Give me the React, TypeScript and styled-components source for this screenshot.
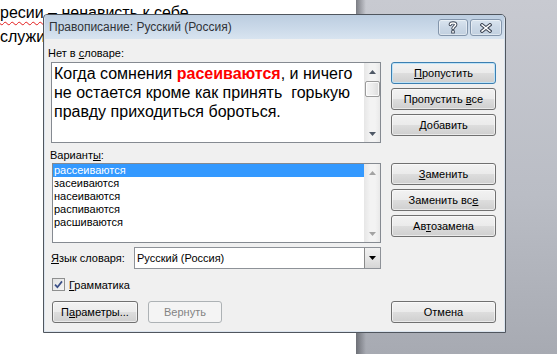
import React from 'react';
import styled, { createGlobalStyle } from 'styled-components';

const GlobalStyle = createGlobalStyle`
  html, body {
    margin: 0;
    padding: 0;
    width: 557px;
    height: 354px;
    overflow: hidden;
  }
  body {
    font-family: "Liberation Sans", Arial, sans-serif;
  }
`;

const UI_FONT = `"Liberation Sans", Tahoma, Arial, sans-serif`;

const Screen = styled.div`
  position: relative;
  display: flex;
  width: 557px;
  height: 354px;
  overflow: hidden;
`;

const DocPage = styled.div`
  width: 356px;
  flex-shrink: 0;
  background: #fff;
  padding-top: 1px;
  font-family: "Liberation Sans", Arial, sans-serif;
  font-size: 16px;
  line-height: 24px;
  color: #000;
  white-space: nowrap;
`;

const Misspelled = styled.span`
  text-decoration: underline wavy #e31b1b;
  text-decoration-thickness: 1px;
  text-underline-offset: 3px;
`;

const Workspace = styled.div`
  flex: 1;
  background: linear-gradient(90deg, rgba(70, 72, 78, 0.6), rgba(70, 72, 78, 0) 10px),
    linear-gradient(180deg, #c8cad1 0%, #babdc5 55%, #a7aab2 100%);
`;

const Window = styled.div`
  position: absolute;
  left: 43px;
  top: 14px;
  width: 463px;
  height: 319px;
  box-sizing: border-box;
  border: 1px solid #50565e;
  border-radius: 4px 5px 0 0;
  padding: 0 1px 1px 1px;
  background: #dbe4ee;
  display: flex;
  flex-direction: column;
  overflow: hidden;
`;

const TitleBar = styled.div`
  height: 24px;
  display: flex;
  align-items: flex-start;
  background: linear-gradient(180deg, #bccde0 0%, #c9d8e8 50%, #d8e4f0 100%);
`;

const Title = styled.div`
  flex: 1;
  padding-left: 4px;
  line-height: 24px;
  font-family: "Liberation Sans", "Segoe UI", sans-serif;
  font-size: 12px;
  color: #2f3338;
`;

const CaptionButtons = styled.div`
  display: flex;
  gap: 2px;
  margin: 4px 2px 0 0;
`;

const CaptionButton = styled.div<{ $w: number }>`
  width: ${(p) => p.$w}px;
  height: 17px;
  box-sizing: border-box;
  border: 1px solid #8395ab;
  border-radius: 3px;
  background: linear-gradient(180deg, #d9e4ef 0%, #cbd8e6 50%, #c1d0e0 100%);
  box-shadow: inset 0 0 0 1px rgba(255, 255, 255, 0.45);
  display: flex;
  align-items: center;
  justify-content: center;
`;

const Body = styled.div`
  flex: 1;
  background: #f0f0f0;
  padding: 0 8px 0 6px;
  display: flex;
  flex-direction: column;
  font-family: ${UI_FONT};
  font-size: 11px;
  color: #000;
`;

const FieldLabel = styled.div<{ $indent: number; $top: number }>`
  margin: ${(p) => p.$top}px 0 0 ${(p) => p.$indent}px;
  height: 14px;
  line-height: 14px;
`;

const Key = styled.span`
  text-decoration: underline;
  text-underline-offset: 1px;
`;

const Section = styled.div<{ $top: number }>`
  display: flex;
  gap: 10px;
  margin-top: ${(p) => p.$top}px;
`;

const ButtonColumn = styled.div`
  width: 105px;
  display: flex;
  flex-direction: column;
  gap: 4px;
`;

const Button = styled.div<{ $w?: number; $default?: boolean; $disabled?: boolean }>`
  width: ${(p) => p.$w ?? 105}px;
  height: 22px;
  box-sizing: border-box;
  border: 1px solid ${(p) => (p.$default ? '#3c7fb1' : p.$disabled ? '#adb2b5' : '#707070')};
  border-radius: 3px;
  background: ${(p) =>
    p.$disabled
      ? '#f4f4f4'
      : 'linear-gradient(180deg, #f2f2f2 0%, #ebebeb 48%, #dddddd 52%, #cfcfcf 100%)'};
  box-shadow: ${(p) =>
    p.$default
      ? 'inset 0 0 0 1px #bfe3f7'
      : p.$disabled
      ? 'none'
      : 'inset 0 0 0 1px rgba(255, 255, 255, 0.55)'};
  color: ${(p) => (p.$disabled ? '#838383' : '#000')};
  display: flex;
  align-items: center;
  justify-content: center;
  line-height: 14px;
`;

const TextBox = styled.div`
  width: 330px;
  height: 81px;
  box-sizing: border-box;
  border: 1px solid #858a91;
  background: #fff;
  display: flex;
`;

const SentenceText = styled.div`
  flex: 1;
  padding: 1px 0 0 2px;
  font-family: "Liberation Sans", Arial, sans-serif;
  font-size: 16px;
  line-height: 19px;
  white-space: pre;
  color: #000;
`;

const Wrong = styled.span`
  color: #ff0000;
  font-weight: bold;
`;

const ScrollBar = styled.div`
  width: 16px;
  display: flex;
  flex-direction: column;
  background: linear-gradient(90deg, #e6e6e6 0%, #f3f3f3 40%, #f3f3f3 70%, #e9e9e9 100%);
`;

const ScrollArrow = styled.div`
  height: 17px;
  display: flex;
  align-items: center;
  justify-content: center;
`;

const ScrollTrack = styled.div`
  flex: 1;
  display: flex;
  flex-direction: column;
  align-items: center;
`;

const Thumb = styled.div`
  margin-top: 1px;
  width: 15px;
  height: 16px;
  box-sizing: border-box;
  border: 1px solid #9b9b9b;
  border-radius: 2px;
  background: linear-gradient(90deg, #f4f4f4 0%, #ececec 50%, #dcdcdc 100%);
  box-shadow: inset 0 0 0 1px rgba(255, 255, 255, 0.8);
`;

const ListBox = styled.div`
  margin-left: 1px;
  width: 329px;
  height: 80px;
  box-sizing: border-box;
  border: 1px solid #858a91;
  background: #fff;
  display: flex;
`;

const ListItems = styled.div`
  flex: 1;
`;

const ListItem = styled.div<{ $selected?: boolean }>`
  height: 13px;
  line-height: 13px;
  padding-left: 1px;
  background: ${(p) => (p.$selected ? '#3399ff' : 'transparent')};
  color: ${(p) => (p.$selected ? '#fff' : '#000')};
`;

const LangRow = styled.div`
  display: flex;
  align-items: center;
  margin-top: 4px;
  height: 22px;
`;

const LangLabel = styled.div`
  width: 83px;
`;

const Combo = styled.div`
  width: 247px;
  height: 22px;
  box-sizing: border-box;
  border: 1px solid #8e9298;
  background: #fff;
  display: flex;
  align-items: center;
`;

const ComboValue = styled.div`
  flex: 1;
  padding-left: 2px;
`;

const ComboDrop = styled.div`
  width: 16px;
  height: 20px;
  box-sizing: border-box;
  border-left: 1px solid #8a8a8a;
  background: linear-gradient(180deg, #f1f1f1 0%, #e6e6e6 50%, #d6d6d6 100%);
  display: flex;
  align-items: center;
  justify-content: center;
`;

const CheckRow = styled.div`
  display: flex;
  align-items: center;
  gap: 4px;
  margin: 9px 0 0 1px;
  height: 13px;
`;

const CheckBox = styled.div`
  width: 13px;
  height: 13px;
  box-sizing: border-box;
  border: 1px solid #8e8f8f;
  background: linear-gradient(135deg, #e3e3e3 0%, #f4f4f4 100%);
  display: flex;
  align-items: center;
  justify-content: center;
`;

const BottomRow = styled.div`
  display: flex;
  justify-content: space-between;
  margin: 10px 0 0 1px;
`;

const ButtonGroup = styled.div`
  display: flex;
  gap: 10px;
`;

const Arrow = ({ up, color }: { up: boolean; color: string }) => (
  <svg width="7" height="4" viewBox="0 0 7 4">
    <polygon points={up ? '3.5,0 7,4 0,4' : '0,0 7,0 3.5,4'} fill={color} />
  </svg>
);

const VScroll = ({ active }: { active: boolean }) => {
  const c = active ? '#4f5866' : '#a3a3a3';
  return (
    <ScrollBar>
      <ScrollArrow>
        <Arrow up color={c} />
      </ScrollArrow>
      <ScrollTrack>{active && <Thumb />}</ScrollTrack>
      <ScrollArrow>
        <Arrow up={false} color={c} />
      </ScrollArrow>
    </ScrollBar>
  );
};

const HelpIcon = () => (
  <svg width="10" height="13" viewBox="0 0 10 13">
    <g fill="none" strokeLinecap="round" strokeLinejoin="round">
      <path d="M2.3 3.6 C2.3 1.3 7.7 1.3 7.7 3.6 C7.7 5.4 5 5.6 5 7.6" stroke="#3e4756" strokeWidth="3.4" />
      <path d="M2.3 3.6 C2.3 1.3 7.7 1.3 7.7 3.6 C7.7 5.4 5 5.6 5 7.6" stroke="#fff" strokeWidth="1.5" />
    </g>
    <rect x="3.2" y="9.2" width="3.6" height="3.3" rx="0.6" fill="#3e4756" />
    <rect x="4.1" y="10.1" width="1.8" height="1.5" fill="#fff" />
  </svg>
);

const CloseIcon = () => (
  <svg width="12" height="10" viewBox="0 0 12 10">
    <path d="M2 1.8 L10 8.2 M10 1.8 L2 8.2" stroke="#3e4756" strokeWidth="3.4" strokeLinecap="square" />
    <path d="M2 1.8 L10 8.2 M10 1.8 L2 8.2" stroke="#fff" strokeWidth="1.4" strokeLinecap="square" />
  </svg>
);

const CheckMark = () => (
  <svg width="9" height="9" viewBox="0 0 9 9">
    <path d="M1 4.6 L3.4 7.2 L8 1.4" fill="none" stroke="#3b4f87" strokeWidth="1.7" />
  </svg>
);

const suggestions = ['рассеиваются', 'засеиваются', 'насеиваются', 'распиваются', 'расшиваются'];

export default function App() {
  return (
    <>
      <GlobalStyle />
      <Screen>
        <DocPage>
          <div>
            <Misspelled>ресии</Misspelled> – ненависть к себе
          </div>
          <div>служи</div>
        </DocPage>
        <Workspace />

        <Window>
          <TitleBar>
            <Title>Правописание: Русский (Россия)</Title>
            <CaptionButtons>
              <CaptionButton $w={30}>
                <HelpIcon />
              </CaptionButton>
              <CaptionButton $w={32}>
                <CloseIcon />
              </CaptionButton>
            </CaptionButtons>
          </TitleBar>

          <Body>
            <FieldLabel $indent={-3} $top={7}>
              Нет в <Key>с</Key>ловаре:
            </FieldLabel>
            <Section $top={2}>
              <TextBox>
                <SentenceText>
                  Когда сомнения <Wrong>расеиваются</Wrong>, и ничего
                  {'\n'}не остается кроме как принять  горькую
                  {'\n'}правду приходиться бороться.
                </SentenceText>
                <VScroll active />
              </TextBox>
              <ButtonColumn>
                <Button $default>
                  <span>
                    <Key>П</Key>ропустить
                  </span>
                </Button>
                <Button>
                  <span>
                    Пропустить <Key>в</Key>се
                  </span>
                </Button>
                <Button>
                  <span>
                    <Key>Д</Key>обавить
                  </span>
                </Button>
              </ButtonColumn>
            </Section>

            <FieldLabel $indent={-1} $top={5}>
              Вариант<Key>ы</Key>:
            </FieldLabel>
            <Section $top={1}>
              <ListBox>
                <ListItems>
                  {suggestions.map((s, i) => (
                    <ListItem key={s} $selected={i === 0}>
                      {s}
                    </ListItem>
                  ))}
                </ListItems>
                <VScroll active={false} />
              </ListBox>
              <ButtonColumn>
                <Button>
                  <span>
                    <Key>З</Key>аменить
                  </span>
                </Button>
                <Button>
                  <span>
                    Заменить вс<Key>е</Key>
                  </span>
                </Button>
                <Button>
                  <span>
                    Ав<Key>т</Key>озамена
                  </span>
                </Button>
              </ButtonColumn>
            </Section>

            <LangRow>
              <LangLabel>
                <Key>Я</Key>зык словаря:
              </LangLabel>
              <Combo>
                <ComboValue>Русский (Россия)</ComboValue>
                <ComboDrop>
                  <Arrow up={false} color="#000" />
                </ComboDrop>
              </Combo>
            </LangRow>

            <CheckRow>
              <CheckBox>
                <CheckMark />
              </CheckBox>
              <span>
                <Key>Г</Key>рамматика
              </span>
            </CheckRow>

            <BottomRow>
              <ButtonGroup>
                <Button $w={86}>
                  <span>
                    П<Key>а</Key>раметры...
                  </span>
                </Button>
                <Button $w={74} $disabled>
                  Вернуть
                </Button>
              </ButtonGroup>
              <Button>Отмена</Button>
            </BottomRow>
          </Body>
        </Window>
      </Screen>
    </>
  );
}
